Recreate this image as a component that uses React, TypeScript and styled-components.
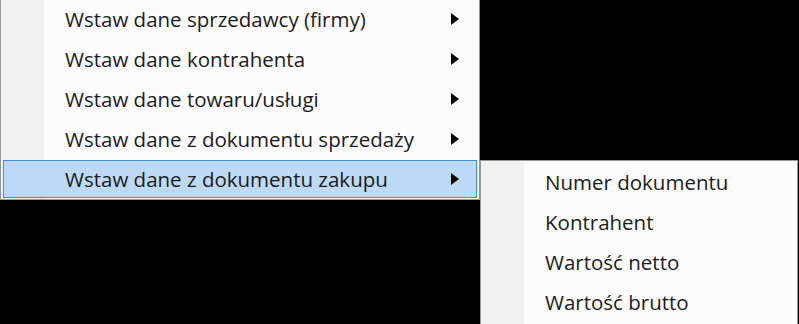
import { FC } from 'react'
import styled, { createGlobalStyle } from 'styled-components'

const GlobalStyle = createGlobalStyle`
  html, body {
    margin: 0;
    padding: 0;
    background: #000;
    height: 100%;
    overflow: hidden;
  }
  #root {
    position: relative;
    width: 799px;
    height: 324px;
    overflow: hidden;
    background: #000;
  }
`

type MenuItemProps = {
  label: string
  hasSubmenu?: boolean
  active?: boolean
}

const MenuItem: FC<MenuItemProps> = ({ label, hasSubmenu = false, active = false }) => {
  return (
    <ItemRow $active={active}>
      <ItemLabel>{label}</ItemLabel>
      {hasSubmenu && <Arrow />}
    </ItemRow>
  )
}

const mainItems = [
  'Wstaw dane sprzedawcy (firmy)',
  'Wstaw dane kontrahenta',
  'Wstaw dane towaru/usługi',
  'Wstaw dane z dokumentu sprzedaży',
  'Wstaw dane z dokumentu zakupu',
]

const subItems = ['Numer dokumentu', 'Kontrahent', 'Wartość netto', 'Wartość brutto']

const App: FC = () => {
  return (
    <>
      <GlobalStyle />
      <MainMenu>
        {mainItems.map((label, i) => (
          <MenuItem key={label} label={label} hasSubmenu active={i === mainItems.length - 1} />
        ))}
      </MainMenu>
      <SubMenu>
        {subItems.map((label) => (
          <MenuItem key={label} label={label} />
        ))}
      </SubMenu>
    </>
  )
}

export default App

const MenuBase = styled.div`
  box-sizing: border-box;
  display: flex;
  flex-direction: column;
  gap: 2px;
  border: 1px solid #979797;
  background: linear-gradient(to right, #f1f1f1 43px, #fcfcfc 43px);
  font-family: 'Open Sans', 'Noto Sans', sans-serif;
  color: #1b1b1b;
`

const MainMenu = styled(MenuBase)`
  width: 480px;
  border-top: none;
  padding: 0 2px 1px;
`

const SubMenu = styled(MenuBase)`
  position: absolute;
  left: 480px;
  top: 160px;
  width: 318px;
  height: 164px;
  border-bottom: none;
  padding: 2px 2px 0;
`

const ItemRow = styled.div<{ $active: boolean }>`
  box-sizing: border-box;
  flex: none;
  height: 38px;
  display: flex;
  align-items: center;
  padding: 0 17px 0 61px;
  border: 1px solid ${({ $active }) => ($active ? '#3f8fe6' : 'transparent')};
  background: ${({ $active }) => ($active ? '#bcd9f6' : 'transparent')};
`

const ItemLabel = styled.span`
  flex: 1;
  font-size: 20.5px;
  white-space: nowrap;
`

const Arrow = styled.span`
  flex: none;
  width: 0;
  height: 0;
  border-top: 6px solid transparent;
  border-bottom: 6px solid transparent;
  border-left: 8px solid #000;
`
